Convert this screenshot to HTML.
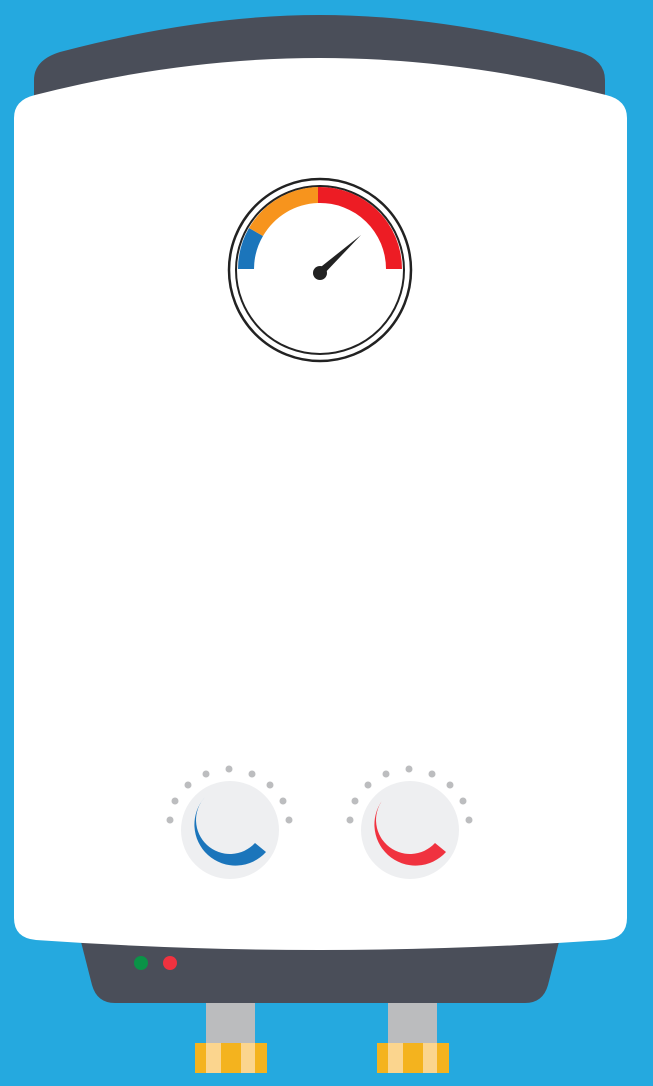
<!DOCTYPE html>
<html><head><style>html,body{margin:0;padding:0;background:#25a9df;width:653px;height:1086px;overflow:hidden}</style></head>
<body>
<svg width="653" height="1086" viewBox="0 0 653 1086" xmlns="http://www.w3.org/2000/svg">
<rect width="653" height="1086" fill="#25a9df"/>
<path d="M34 80 Q34 60 60 52 Q200 15 320 15 Q440 15 580 52 Q605 60 605 80 L605 120 L34 120 Z" fill="#4a4e59"/>
<path d="M78 930 L562 930 L548 985 Q543 1003 525 1003 L115 1003 Q97 1003 92 985 Z" fill="#4a4e59"/>
<circle cx="141" cy="963" r="7" fill="#0a9347"/>
<circle cx="170" cy="963" r="7" fill="#f0323f"/>
<rect x="206" y="1003" width="49" height="42" fill="#bbbcbe"/>
<rect x="388" y="1003" width="49" height="42" fill="#bbbcbe"/>
<rect x="195" y="1043" width="72" height="30" fill="#f4b31e"/>
<rect x="206" y="1043" width="15" height="30" fill="#fbd58e"/>
<rect x="241" y="1043" width="14" height="30" fill="#fbd58e"/>
<rect x="377" y="1043" width="72" height="30" fill="#f4b31e"/>
<rect x="388" y="1043" width="15" height="30" fill="#fbd58e"/>
<rect x="423" y="1043" width="14" height="30" fill="#fbd58e"/>
<path d="M14 118 Q14 100 35 95 Q180 58 320 58 Q460 58 606 95 Q627 100 627 118 L627 918 Q627 938 605 940 Q460 950 320 950 Q180 950 36 940 Q14 938 14 918 Z" fill="#ffffff"/>
<circle cx="320" cy="270" r="91" fill="none" stroke="#222" stroke-width="2.5"/>
<circle cx="320" cy="270" r="84" fill="none" stroke="#222" stroke-width="2"/>
<path d="M238 269 A82 82 0 0 1 249 228 L263 236 A66 66 0 0 0 254 269 Z" fill="#1b75bb"/>
<path d="M249 228 A82 82 0 0 1 318 187 L318 203 A66 66 0 0 0 263 236 Z" fill="#f7941d"/>
<path d="M318 187 A82 82 0 0 1 402 269 L386 269 A66 66 0 0 0 318 203 Z" fill="#ed1c24"/>
<path d="M317 270 L361 235 L322 276 Z" fill="#222"/>
<circle cx="320" cy="273" r="7" fill="#222"/>
<g fill="#bcbdbf">
<circle cx="170" cy="820" r="3.5"/><circle cx="175" cy="801" r="3.5"/><circle cx="188" cy="785" r="3.5"/><circle cx="206" cy="774" r="3.5"/><circle cx="229" cy="769" r="3.5"/><circle cx="252" cy="774" r="3.5"/><circle cx="270" cy="785" r="3.5"/><circle cx="283" cy="801" r="3.5"/><circle cx="289" cy="820" r="3.5"/>
<circle cx="350" cy="820" r="3.5"/><circle cx="355" cy="801" r="3.5"/><circle cx="368" cy="785" r="3.5"/><circle cx="386" cy="774" r="3.5"/><circle cx="409" cy="769" r="3.5"/><circle cx="432" cy="774" r="3.5"/><circle cx="450" cy="785" r="3.5"/><circle cx="463" cy="801" r="3.5"/><circle cx="469" cy="820" r="3.5"/>
</g>
<circle cx="230" cy="830" r="49" fill="#eeeff1"/>
<circle cx="410" cy="830" r="49" fill="#eeeff1"/>
<path d="M205 797 A41 41 0 1 0 266 852 L255 843 A29 29 0 1 1 205 797 Z" fill="#1b75bb"/>
<path d="M385 797 A41 41 0 1 0 446 852 L435 843 A29 29 0 1 1 385 797 Z" fill="#f0323f"/>
</svg>
</body></html>
